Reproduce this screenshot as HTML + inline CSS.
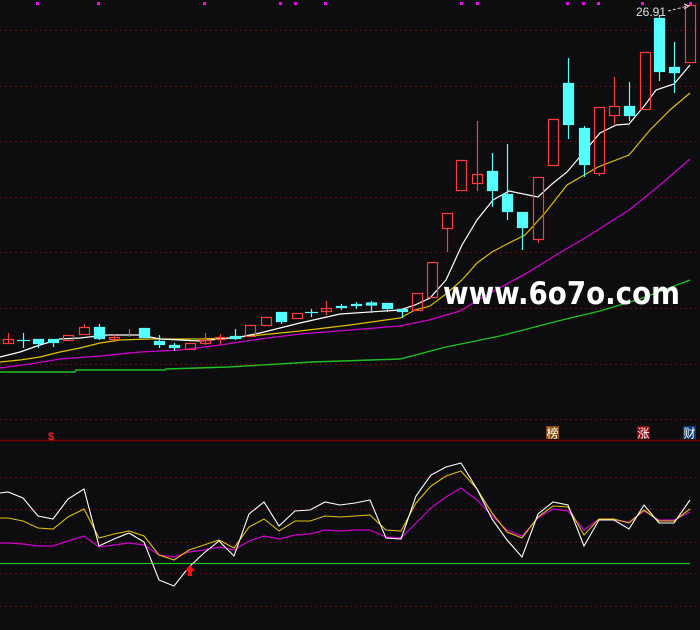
<!DOCTYPE html>
<html><head><meta charset="utf-8"><style>
html,body{margin:0;padding:0;background:#0d0d10;width:700px;height:630px;overflow:hidden}
svg{display:block}
</style></head><body>
<svg width="700" height="630" viewBox="0 0 700 630" xmlns="http://www.w3.org/2000/svg">
<rect width="700" height="630" fill="#0d0d10"/>
<g stroke="#6a0c0c" stroke-width="1" stroke-dasharray="2,3">
<line x1="0" y1="30.5" x2="700" y2="30.5"/><line x1="0" y1="86.5" x2="700" y2="86.5"/>
<line x1="0" y1="141.5" x2="700" y2="141.5"/><line x1="0" y1="197.5" x2="700" y2="197.5"/>
<line x1="0" y1="252.5" x2="700" y2="252.5"/><line x1="0" y1="308.5" x2="700" y2="308.5"/>
<line x1="0" y1="364.5" x2="700" y2="364.5"/><line x1="0" y1="419.5" x2="700" y2="419.5"/>
<line x1="0" y1="477.5" x2="700" y2="477.5"/><line x1="0" y1="509.5" x2="700" y2="509.5"/>
<line x1="0" y1="542.5" x2="700" y2="542.5"/><line x1="0" y1="573.5" x2="700" y2="573.5"/>
<line x1="0" y1="606.5" x2="700" y2="606.5"/>
</g>
<line x1="0" y1="440.5" x2="700" y2="440.5" stroke="#7a0000" stroke-width="1.5"/>
<g fill="#ff00ff">
<rect x="36" y="2" width="3" height="3"/><rect x="97" y="2" width="3" height="3"/><rect x="203" y="2" width="3" height="3"/>
<rect x="279" y="2" width="3" height="3"/><rect x="294" y="2" width="3" height="3"/><rect x="324" y="2" width="3" height="3"/>
<rect x="460" y="2" width="3" height="3"/><rect x="476" y="2" width="3" height="3"/><rect x="566" y="2" width="3" height="3"/>
<rect x="582" y="2" width="3" height="3"/><rect x="597" y="2" width="3" height="3"/><rect x="641" y="2" width="3" height="3"/>
<rect x="689" y="2" width="3" height="3"/>
</g>
<polyline fill="none" stroke="#1fc01f" stroke-width="1.4" points="0,372 75,372 76,370 165,370 166,369 228,367 312,362 400,359 446,347 500,336 562,320 600,311 640,299 690,280"/>
<polyline fill="none" stroke="#d000d0" stroke-width="1.3" points="0,368 30,364 60,359 100,356 140,352 180,350 220,345 260,339 300,334 350,330 400,326 429,320 460,311 490,293 527,273 556,255 585,238 629,210 660,185 690,159"/>
<polyline fill="none" stroke="#e0c000" stroke-width="1.2" points="0,362 20,360 40,357 60,352 80,348 100,343 120,340 150,339 200,339 230,338 260,335 300,331 350,325 400,318 415,310 430,306 446,294 462,280 477,263 492,252 509,243 525,235 545,213 567,185 598,167 629,155 650,130 670,110 690,93"/>
<polyline fill="none" stroke="#ffffff" stroke-width="1.2" points="0,357 20,352 40,345 60,339 80,338 107,335 140,335 160,339 200,341 240,337 260,333 300,323 340,314 400,310 415,305 430,298 446,280 462,245 477,220 493,200 509,191 538,197 552,184 567,172 584,152 600,133 616,125 629,124 645,105 656,90 674,84 690,65"/>
<g stroke-width="1.2">
<g stroke="#ff3c3c" fill="none">
<line x1="8.5" y1="333" x2="8.5" y2="344"/><rect x="3.5" y="339.5" width="10" height="4"/>
<rect x="63.5" y="335.5" width="10" height="5"/>
<line x1="84.5" y1="324" x2="84.5" y2="328"/><rect x="79.5" y="327.5" width="10" height="7"/>
<line x1="114.5" y1="335" x2="114.5" y2="340"/><rect x="109.5" y="337.5" width="10" height="2"/>
<line x1="129.5" y1="329" x2="129.5" y2="337"/>
<rect x="185.5" y="343.5" width="10" height="6"/>
<line x1="205.5" y1="333" x2="205.5" y2="345"/><rect x="200.5" y="340.5" width="10" height="3"/>
<line x1="220.5" y1="334" x2="220.5" y2="345"/><rect x="215.5" y="337.5" width="10" height="2"/>
<rect x="245.5" y="325.5" width="10" height="11"/>
<rect x="261.5" y="317.5" width="10" height="8"/>
<rect x="292.5" y="313.5" width="10" height="5"/>
<line x1="326.5" y1="301" x2="326.5" y2="315"/><rect x="321.5" y="308.5" width="10" height="3"/>
<rect x="412.5" y="293.5" width="10" height="17"/>
<rect x="427.5" y="262.5" width="10" height="35"/>
<line x1="447.5" y1="228" x2="447.5" y2="252"/><rect x="442.5" y="213.5" width="10" height="15"/>
<rect x="456.5" y="160.5" width="10" height="30"/>
<line x1="477.5" y1="121" x2="477.5" y2="191"/><rect x="472.5" y="174.5" width="10" height="9"/>
<line x1="538.5" y1="239" x2="538.5" y2="243"/><rect x="533.5" y="177.5" width="10" height="62"/>
<rect x="548.5" y="119.5" width="10" height="46"/>
<line x1="614.5" y1="77" x2="614.5" y2="106"/><line x1="614.5" y1="115" x2="614.5" y2="124"/><rect x="609.5" y="106.5" width="10" height="9"/>
<line x1="599.5" y1="173" x2="599.5" y2="176"/><rect x="594.5" y="107.5" width="10" height="66"/>
<rect x="640.5" y="52.5" width="10" height="57"/>
<rect x="685.5" y="5.5" width="10" height="57"/>
</g>
<g stroke="#54ffff" fill="#54ffff">
<line x1="23.5" y1="333" x2="23.5" y2="348"/><line x1="17" y1="340.5" x2="30" y2="340.5"/>
<rect x="33.5" y="339.5" width="10" height="4"/><line x1="38.5" y1="343" x2="38.5" y2="348"/>
<rect x="48.5" y="339.5" width="10" height="3"/><line x1="53.5" y1="343" x2="53.5" y2="347"/>
<rect x="94.5" y="327.5" width="10" height="11"/><line x1="99.5" y1="324" x2="99.5" y2="340"/>
<rect x="139.5" y="328.5" width="10" height="9"/>
<rect x="154.5" y="341.5" width="10" height="3"/><line x1="159.5" y1="335" x2="159.5" y2="348"/>
<rect x="169.5" y="345.5" width="10" height="2"/><line x1="174.5" y1="343" x2="174.5" y2="351"/>
<rect x="230.5" y="336.5" width="10" height="2"/><line x1="235.5" y1="329" x2="235.5" y2="340"/>
<rect x="276.5" y="312.5" width="10" height="9"/><line x1="281.5" y1="321" x2="281.5" y2="324"/>
<line x1="311.5" y1="309" x2="311.5" y2="317"/><line x1="305" y1="312.5" x2="318" y2="312.5"/>
<rect x="336.5" y="306.5" width="10" height="1"/><line x1="341.5" y1="304" x2="341.5" y2="310"/>
<rect x="351.5" y="304.5" width="10" height="1"/><line x1="356.5" y1="302" x2="356.5" y2="309"/>
<rect x="366.5" y="303" width="10" height="2"/><line x1="371.5" y1="301" x2="371.5" y2="313"/>
<rect x="382.5" y="303.5" width="10" height="5"/><line x1="387.5" y1="308" x2="387.5" y2="312"/>
<rect x="397.5" y="309.5" width="10" height="2"/><line x1="402.5" y1="311" x2="402.5" y2="318"/>
<rect x="487.5" y="171.5" width="10" height="19"/><line x1="492.5" y1="153" x2="492.5" y2="207"/>
<rect x="502.5" y="194.5" width="10" height="17"/><line x1="507.5" y1="144" x2="507.5" y2="220"/>
<rect x="517.5" y="212.5" width="10" height="15"/><line x1="522.5" y1="227" x2="522.5" y2="250"/>
<rect x="563.5" y="83.5" width="10" height="41"/><line x1="568.5" y1="58" x2="568.5" y2="139"/>
<rect x="579.5" y="128.5" width="10" height="36"/><line x1="584.5" y1="126" x2="584.5" y2="177"/>
<rect x="624.5" y="106.5" width="10" height="9"/><line x1="629.5" y1="82" x2="629.5" y2="121"/>
<rect x="654.5" y="18.5" width="10" height="53"/><line x1="659.5" y1="15" x2="659.5" y2="81"/>
<rect x="669.5" y="67.5" width="10" height="5"/><line x1="674.5" y1="42" x2="674.5" y2="93"/>
</g>
</g>
<text x="636" y="16" font-family="Liberation Sans, sans-serif" font-size="12" fill="#e0e0e0">26.91</text>
<line x1="668" y1="11" x2="688" y2="6" stroke="#e0e0e0" stroke-dasharray="3,2"/>
<path d="M684,4 L689,6 L684,9" stroke="#e0e0e0" fill="none"/>
<text x="443" y="304" font-family="DejaVu Sans, sans-serif" font-weight="bold" font-size="31" fill="#ffffff" textLength="237" lengthAdjust="spacingAndGlyphs">www.6o7o.com</text>
<text x="48" y="440" font-family="Liberation Sans, sans-serif" font-size="11" font-weight="bold" fill="#ff2020">$</text>
<rect x="546" y="426" width="13" height="13" fill="#8a4a08"/>
<text x="546.5" y="437.5" font-family="Noto Sans CJK SC, sans-serif" font-size="12" fill="#fff">榜</text>
<rect x="637" y="426" width="13" height="13" fill="#8a0a0a"/>
<text x="637.5" y="437.5" font-family="Noto Sans CJK SC, sans-serif" font-size="12" fill="#fff">涨</text>
<rect x="683" y="426" width="13" height="13" fill="#0a3a7a"/>
<text x="683.5" y="437.5" font-family="Noto Sans CJK SC, sans-serif" font-size="12" fill="#fff">财</text>
<line x1="0" y1="563.5" x2="690" y2="563.5" stroke="#1fc01f" stroke-width="1.3"/>
<polyline fill="none" stroke="#d000d0" stroke-width="1.2" points="0,543 8,543 23,544 38,546 53,546 68,541 84,536 99,547 114,545 129,543 144,545 159,555 174,557 189,552 204,550 219,547 234,550 249,541 264,536 279,539 295,535 310,534 325,530 340,531 355,530 370,530 386,537 401,538 416,523 431,508 446,497 461,488 477,500 492,516 507,530 522,536 538,518 553,509 568,511 584,530 599,519 614,520 629,522 644,511 659,520 674,520 690,512"/>
<polyline fill="none" stroke="#e0c000" stroke-width="1.1" points="0,518 8,518 23,521 38,528 53,529 68,517 84,509 99,538 114,534 129,531 144,536 159,555 174,560 189,550 204,545 219,540 234,548 249,527 264,519 279,531 295,521 310,521 325,516 340,517 355,516 370,515 386,530 401,531 416,503 431,486 446,476 461,471 477,489 492,513 507,532 522,538 538,517 553,506 568,507 584,535 599,519 614,519 629,523 644,510 659,521 674,521 690,509"/>
<polyline fill="none" stroke="#ffffff" stroke-width="1.1" points="0,493 8,492 23,498 38,516 53,519 68,499 84,489 99,546 114,539 129,533 144,542 159,580 174,586 189,567 204,553 219,541 234,556 249,514 264,502 279,526 295,511 310,510 325,502 340,505 355,503 370,500 386,538 401,539 416,496 431,475 446,467 461,463 477,489 492,519 507,540 522,557 538,514 553,502 568,505 584,546 599,520 614,520 629,529 644,505 659,523 674,523 690,500"/>
<path d="M190,565 L195,571 L192,571 L192,576 L188,576 L188,571 L185,571 Z" fill="#ff1010"/>
</svg>
</body></html>
